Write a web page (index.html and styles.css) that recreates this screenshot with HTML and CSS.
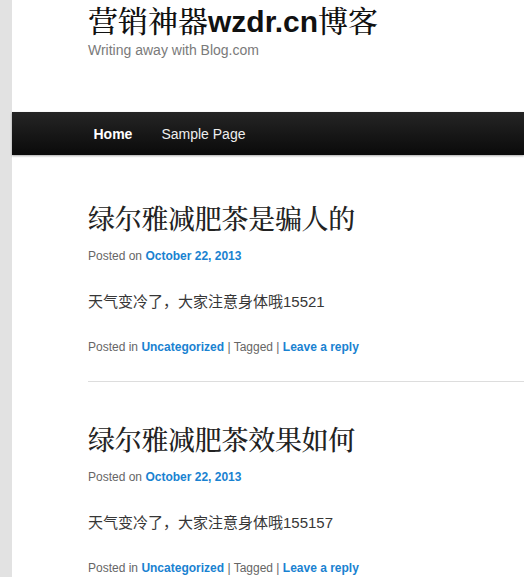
FILE: index.html
```html
<!DOCTYPE html>
<html lang="zh-CN">
<head>
  <meta charset="UTF-8">
  <title>营销神器wzdr.cn博客</title>
  <link rel="stylesheet" href="styles.css">
</head>
<body>
  <div class="page">
    <!-- 头部 -->
    <header class="site-header">
      <h1 class="site-title">营销神器<span class="latin">wzdr.cn</span>博客</h1>
      <div class="site-desc">Writing away with Blog.com</div>
    </header>

    <nav class="menu">
      <a href="#" class="current">Home</a>
      <a href="#">Sample Page</a>
    </nav>

    <!-- 文章列表 -->
    <main class="posts">
      <article class="post">
        <h2 class="entry-title">绿尔雅减肥茶是骗人的</h2>
        <div class="meta">Posted on <a href="#">October 22, 2013</a></div>
        <p class="content">天气变冷了，大家注意身体哦15521</p>
        <div class="meta footer">Posted in <a href="#">Uncategorized</a> | Tagged | <a href="#">Leave a reply</a></div>
      </article>

      <article class="post">
        <h2 class="entry-title">绿尔雅减肥茶效果如何</h2>
        <div class="meta">Posted on <a href="#">October 22, 2013</a></div>
        <p class="content">天气变冷了，大家注意身体哦155157</p>
        <div class="meta footer">Posted in <a href="#">Uncategorized</a> | Tagged | <a href="#">Leave a reply</a></div>
      </article>
    </main>
  </div>
</body>
</html>
```

FILE: styles.css
```css
body { margin: 0; background: #e2e2e2; font-family: "Liberation Sans", Arial, "Noto Sans CJK SC", sans-serif; color: #373737; overflow: hidden; }
a { text-decoration: none; }

.page { margin-left: 12px; background: #fff; min-height: 100vh; }

.site-header { padding: 1px 0 0 76px; }
.site-title { margin: 0; font-family: "Noto Serif CJK SC", "Liberation Serif", "Noto Sans CJK SC", serif; font-size: 30px; font-weight: 500; line-height: 37px; color: #111; }
.site-title .latin { font-family: "Liberation Sans", Arial, sans-serif; font-weight: bold; }
.site-desc { font-size: 14px; line-height: 20px; color: #7a7a7a; }

.menu { margin-top: 52px; height: 43px; display: flex; align-items: center; padding-left: 67px; background: linear-gradient(#252525, #0a0a0a); box-shadow: 0 1px 2px rgba(0, 0, 0, 0.35); }
.menu a { color: #eee; font-size: 14px; padding: 0 14.5px; }
.menu a.current { font-weight: bold; color: #fff; }

.posts { padding-top: 6px; }
.post { margin-left: 76px; padding: 37px 0 25px; border-bottom: 1px solid #ddd; }
.post:last-child { border-bottom: none; }
.entry-title { margin: 0; font-family: "Noto Serif CJK SC", "Liberation Serif", "Noto Sans CJK SC", serif; font-size: 27px; font-weight: 500; line-height: 40px; letter-spacing: -0.3px; color: #222; }
.meta { margin-top: 9px; font-size: 12px; line-height: 18px; color: #666; }
.meta a { color: #1982d1; font-weight: bold; }
.content { margin: 25px 0 0; font-size: 15px; line-height: 24px; color: #373737; }
.meta.footer { margin-top: 24px; }
```
